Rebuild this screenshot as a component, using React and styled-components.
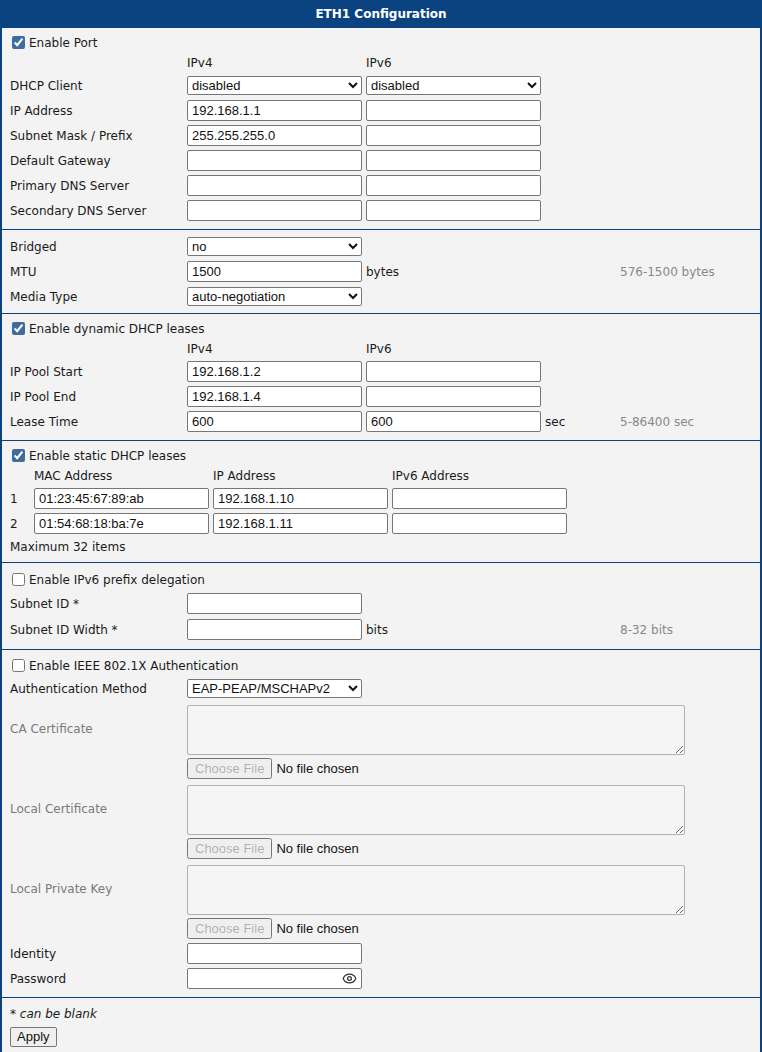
import React from 'react'
import styled, { createGlobalStyle } from 'styled-components'
import { Eye } from 'lucide-react'

const Global = createGlobalStyle`
  body { margin: 0; background: #fff; font-family: "DejaVu Sans", Verdana, sans-serif; }
`

const Panel = styled.div`
  width: 762px;
  box-sizing: border-box;
  border: 2px solid #0a437f;
  border-top: none;
  background: #f3f3f3;
`

const Title = styled.div`
  height: 28px;
  margin: 0 -2px;
  background: #0a437f;
  color: #fff;
  font-weight: bold;
  font-size: 12px;
  display: flex;
  align-items: center;
  justify-content: center;
`

const Section = styled.div`
  padding: 4px 8px ${p => p.$bottom || 4}px 8px;
  border-top: ${p => (p.$first ? 'none' : '1px solid #0a437f')};
`

const Row = styled.div`
  display: grid;
  grid-template-columns: ${p => p.$cols || '177px 179px 179px 75px auto'};
  align-items: center;
  height: ${p => p.$h || 25}px;
  font-size: 12px;
  color: ${p => (p.$muted ? '#7a7a7a' : '#1a1a1a')};
`

const Check = styled.label`
  display: flex;
  align-items: center;
  gap: 4px;
  height: 21px;
  font-size: 12px;
  color: #1a1a1a;
  input { margin: 0 0 0 2px; width: 13px; height: 13px; accent-color: #3e6c9c; }
`

const Input = styled.input`
  box-sizing: border-box;
  width: 175px;
  height: 21px;
  border: 1px solid #767676;
  border-radius: 2px;
  padding: 1px 4px;
  font: 13px "Liberation Sans", Arial, sans-serif;
  color: #111;
  background: #fff;
`

const Select = styled.select`
  box-sizing: border-box;
  width: 175px;
  height: 19px;
  border: 1px solid #767676;
  border-radius: 2px;
  font: 13px "Liberation Sans", Arial, sans-serif;
  color: #111;
  background: #fff;
`

const Area = styled.textarea`
  box-sizing: border-box;
  display: block;
  width: 498px;
  height: 50px;
  margin-top: 2px;
  border: 1px solid #b0b0b0;
  border-radius: 2px;
  background: #f5f5f5;
  resize: vertical;
`

const File = styled.input`
  font: 13px "Liberation Sans", Arial, sans-serif;
  color: #111;
`

const Hint = styled.span`
  color: #888;
`

const PwWrap = styled.div`
  position: relative;
  width: 175px;
  height: 21px;
  svg { position: absolute; right: 5px; top: 3px; color: #333; }
`

const Note = styled.div`
  font-size: 12px;
  font-style: italic;
  height: 24px;
  display: flex;
  align-items: center;
  color: #1a1a1a;
`

const Button = styled.button`
  font: 13px "Liberation Sans", Arial, sans-serif;
  padding: 1px 6px;
  height: 20px;
  border: 1px solid #767676;
  border-radius: 2px;
  background: #efefef;
  color: #111;
  margin-bottom: 8px;
`

const Field = ({ label, a, b, unit, hint }) => (
  <Row>
    <span>{label}</span>
    <div><Input defaultValue={a} /></div>
    {b !== undefined ? <div><Input defaultValue={b} /></div> : <span>{unit}</span>}
    <span>{b !== undefined ? unit : ''}</span>
    <Hint>{hint}</Hint>
  </Row>
)

const SelField = ({ label, value, b }) => (
  <Row>
    <span>{label}</span>
    <div><Select defaultValue={value}><option>{value}</option></Select></div>
    <div>{b && <Select defaultValue={b}><option>{b}</option></Select>}</div>
  </Row>
)

const Head = ({ cols, items }) => (
  <Row $h={20} $cols={cols}>
    {items.map((t, i) => <span key={i}>{t}</span>)}
  </Row>
)

const CertField = ({ label }) => (
  <>
    <Row $h={55} $muted $cols="177px auto">
      <span>{label}</span>
      <div><Area disabled /></div>
    </Row>
    <Row $cols="177px auto">
      <span />
      <div><File type="file" disabled /></div>
    </Row>
  </>
)

const leaseCols = '24px 179px 179px auto'

export default function App() {
  return (
    <>
      <Global />
      <Panel>
        <Title>ETH1 Configuration</Title>
        <Section $first $bottom={6}>
          <Check><input type="checkbox" defaultChecked /> Enable Port</Check>
          <Head items={['', 'IPv4', 'IPv6']} />
          <SelField label="DHCP Client" value="disabled" b="disabled" />
          <Field label="IP Address" a="192.168.1.1" b="" />
          <Field label="Subnet Mask / Prefix" a="255.255.255.0" b="" />
          <Field label="Default Gateway" a="" b="" />
          <Field label="Primary DNS Server" a="" b="" />
          <Field label="Secondary DNS Server" a="" b="" />
        </Section>
        <Section>
          <SelField label="Bridged" value="no" />
          <Field label="MTU" a="1500" unit="bytes" hint="576-1500 bytes" />
          <SelField label="Media Type" value="auto-negotiation" />
        </Section>
        <Section $bottom={6}>
          <Check><input type="checkbox" defaultChecked /> Enable dynamic DHCP leases</Check>
          <Head items={['', 'IPv4', 'IPv6']} />
          <Field label="IP Pool Start" a="192.168.1.2" b="" />
          <Field label="IP Pool End" a="192.168.1.4" b="" />
          <Field label="Lease Time" a="600" b="600" unit="sec" hint="5-86400 sec" />
        </Section>
        <Section $bottom={4}>
          <Check><input type="checkbox" defaultChecked /> Enable static DHCP leases</Check>
          <Head cols={leaseCols} items={['', 'MAC Address', 'IP Address', 'IPv6 Address']} />
          {[['01:23:45:67:89:ab', '192.168.1.10'], ['01:54:68:18:ba:7e', '192.168.1.11']].map(([m, ip], i) => (
            <Row key={i} $cols={leaseCols}>
              <span>{i + 1}</span>
              <div><Input defaultValue={m} /></div>
              <div><Input defaultValue={ip} /></div>
              <div><Input /></div>
            </Row>
          ))}
          <Row $h={22} $cols="auto"><span>Maximum 32 items</span></Row>
        </Section>
        <Section $bottom={7} style={{ paddingTop: 6 }}>
          <Check><input type="checkbox" /> Enable IPv6 prefix delegation</Check>
          <Row $h={27}>
            <span>Subnet ID *</span>
            <div><Input /></div>
          </Row>
          <Field label="Subnet ID Width *" a="" unit="bits" hint="8-32 bits" />
        </Section>
        <Section $bottom={6} style={{ paddingTop: 5 }}>
          <Check><input type="checkbox" /> Enable IEEE 802.1X Authentication</Check>
          <SelField label="Authentication Method" value="EAP-PEAP/MSCHAPv2" />
          <CertField label="CA Certificate" />
          <CertField label="Local Certificate" />
          <CertField label="Local Private Key" />
          <Field label="Identity" a="" />
          <Row>
            <span>Password</span>
            <PwWrap>
              <Input type="password" />
              <Eye size={15} strokeWidth={2} />
            </PwWrap>
          </Row>
        </Section>
        <Section $bottom={4} style={{ paddingTop: 4 }}>
          <Note>* <i>&nbsp;can be blank</i></Note>
          <Button>Apply</Button>
        </Section>
      </Panel>
    </>
  )
}
